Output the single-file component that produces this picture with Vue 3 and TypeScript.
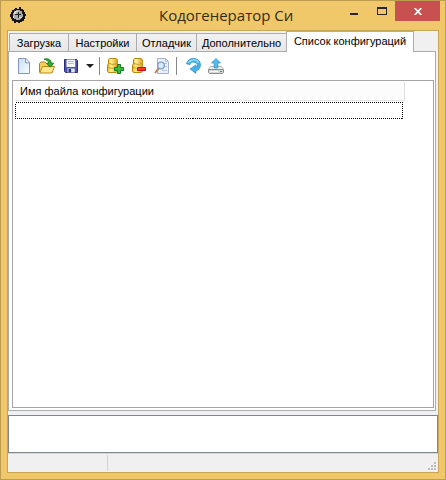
<script setup lang="ts">
import { ref } from 'vue'

interface Tab { label: string; width: number; spacing: number }

const tabs: Tab[] = [
  { label: 'Загрузка', width: 59, spacing: 0 },
  { label: 'Настройки', width: 68, spacing: 0 },
  { label: 'Отладчик', width: 60, spacing: 0 },
  { label: 'Дополнительно', width: 90, spacing: 0 },
  { label: 'Список конфигураций', width: 128, spacing: 0 },
]
const active = ref(4)
</script>

<template>
  <div class="window">
    <header class="titlebar">
      <svg class="gear" width="16" height="16" viewBox="0 0 16 16" shape-rendering="crispEdges">
        <path fill="#151515" d="M5 1h2v1h2V0h2v2h2v1h1v2h1v2h1v2h-1v3h-1v2h-2v1h-2v1H8v-1H6v1H4v-2H2v-2H1v-2H0V7h1V5h1V3h2V2h1z" />
        <circle cx="8" cy="8" r="5" fill="#aaa" />
        <path fill="#ddd" d="M5 4h3v1H6v2H4V5h1zM9 10h3v1H9zM3 9h1v2H3z" />
        <path fill="#222" d="M8 5h1v2h2v1H9v3H8V8H5V7h3zM4 3h2v1H4zM12 5h1v2h-1zM11 11h1v1h-1z" />
      </svg>
      <h1>Кодогенератор Си</h1>
      <div class="controls">
        <button class="min" aria-label="Свернуть"><i></i></button>
        <button class="max" aria-label="Развернуть"><i></i></button>
        <button class="close" aria-label="Закрыть">
          <svg width="8" height="7" viewBox="0 0 8 7"><path d="M.7 0l6.6 7M7.3 0L.7 7" stroke="#fff" stroke-width="1.7" /></svg>
        </button>
      </div>
    </header>

    <main class="client">
      <nav class="tabs">
        <button
          v-for="(t, i) in tabs"
          :key="t.label"
          class="tab"
          :class="{ active: i === active }"
          :style="{ width: t.width + 'px', letterSpacing: t.spacing + 'px' }"
          @click="active = i"
        >{{ t.label }}</button>
      </nav>

      <section class="pane">
        <div class="toolbar">
          <svg class="doc" width="12" height="16" viewBox="0 0 12 16">
            <defs><linearGradient id="paper" x1="0" y1="0" x2="1" y2="1"><stop offset="0" stop-color="#c9dcf4" /><stop offset="1" stop-color="#fafdff" /></linearGradient></defs>
            <path d="M.5.5h7.5l3.5 3.8v11.2H.5z" fill="url(#paper)" stroke="#8094bd" />
            <path d="M7.5.8v4h3.8" fill="#eef5ff" stroke="#8094bd" />
          </svg>
          <svg class="folder" width="16" height="16" viewBox="0 0 16 16">
            <path d="M.5 14V5.5L2 4h4l1.5 1.5H13V14z" fill="#f6cf55" stroke="#b88413" />
            <path d="M.8 15l2.7-6.5h12L13 15z" fill="#ffe88b" stroke="#bd8a17" />
            <path d="M5 1.2c3.8-1.4 7 .2 7.4 4h2.3l-3.6 4-3.6-4h2.2C9.3 3 7.8 1.8 5 1.2z" fill="#34ad35" stroke="#14751b" stroke-width=".8" />
          </svg>
          <svg class="floppy" width="14" height="14" viewBox="0 0 14 14">
            <path d="M.5.5h12l1 1v12h-12l-1-1z" fill="#4c50b5" stroke="#292d82" />
            <path d="M2.5.5h8.7V8H2.5z" fill="#f4f5fb" />
            <path d="M4 2.5h5.8M4 4.5h5.8" stroke="#b7bcc9" />
            <path d="M3.5 9.5h7.3v4H3.5z" fill="#dfe3ee" /><path d="M4.5 10h2.6v3.5H4.5z" fill="#27307b" />
          </svg>
          <svg class="caret" width="8" height="4" viewBox="0 0 8 4"><path d="M0 0h8L4 4z" fill="#222" /></svg>
          <i class="sep first"></i>
          <svg class="dbadd" width="17" height="16" viewBox="0 0 17 16">
            <defs><linearGradient id="gold"><stop offset="0" stop-color="#e7af16" /><stop offset=".35" stop-color="#fff48f" /><stop offset="1" stop-color="#dfa817" /></linearGradient></defs>
            <path d="M2.5.5h6.8l1 1v12l-1 1H1.5l-1-1V7l1-1V1.5z" fill="url(#gold)" stroke="#bd850c" />
            <path d="M2 5.5q4 2 8 0M1 9.5q4.5 2 9 0" fill="none" stroke="#d09b1d" />
            <path d="M10.5 6.5h3v3h3v3h-3v3h-3v-3h-3v-3h3z" fill="#38bd3c" stroke="#137b25" />
          </svg>
          <svg class="dbdel" width="14" height="16" viewBox="0 0 14 16">
            <path d="M2.5.5h6.8l1 1v12l-1 1H1.5l-1-1V7l1-1V1.5z" fill="url(#gold)" stroke="#bd850c" />
            <path d="M2 5.5q4 2 8 0M1 9.5q4.5 2 9 0" fill="none" stroke="#d09b1d" />
            <path d="M5.5 9.5h8v3h-8z" fill="#f13c25" stroke="#c91410" />
          </svg>
          <svg class="search" width="16" height="16" viewBox="0 0 16 16">
            <path d="M3.5.5h8l3 3v12h-11z" fill="#e9f0fc" stroke="#a5afd0" />
            <path d="M11.5.5v3h3M9 5.5h4M10 8.5h3M8 12.5h5" fill="none" stroke="#b7c0dc" />
            <path d="M4.5 10.5L1 15" stroke="#c77b44" stroke-width="2" />
            <circle cx="7" cy="7.5" r="3.3" fill="#d2edff" stroke="#809dc5" stroke-width="1.3" />
          </svg>
          <i class="sep second"></i>
          <svg class="refresh" width="15" height="16" viewBox="0 0 15 16">
            <path d="M.6 5.8C1.7 1.8 4.3.5 7.3.5c4.3 0 7.1 2.8 7.1 6.3 0 3-1.7 5.3-4.6 6v2.5L4.2 11l5.6-4v2.3c1.1-.5 1.6-1.2 1.6-2.2 0-1.9-1.6-3-4-3-1.6 0-2.7.6-3.3 2.4z" fill="#43b5ed" stroke="#2389cc" stroke-width=".8" />
            <path d="M2.3 4.7C5 .8 10.6 1 12.7 4.5" fill="none" stroke="#9be1ff" stroke-width="1.2" />
          </svg>
          <svg class="upload" width="16" height="16" viewBox="0 0 16 16">
            <path d="M2.5 8.5h11l2 3v3l-1 1h-13l-1-1v-3z" fill="#eee" stroke="#b3b3b3" />
            <path d="M.5 11.5h15v3l-1 1h-13l-1-1z" fill="#d8d8d8" stroke="#8c8c8c" />
            <path d="M12 13.5h2" stroke="#31a631" /><path d="M2 13.5h8" stroke="#f5f5f5" />
            <path d="M8 .5l4.5 4.4h-2.7v5H6.2v-5H3.5z" fill="#52bdf1" stroke="#2b93cf" stroke-width=".8" />
          </svg>
        </div>

        <div class="list">
          <div class="list-header"><span>Имя файла конфигурации</span></div>
          <svg class="focus-row" width="388" height="17" viewBox="0 0 388 17" shape-rendering="crispEdges">
            <rect x=".5" y=".5" width="387" height="16" fill="none" stroke="#000" stroke-dasharray="1 1" />
          </svg>
        </div>
      </section>

      <textarea class="output"></textarea>
      <footer class="status">
        <i class="divider"></i>
        <svg class="grip" width="8" height="8" viewBox="0 0 8 8"><path fill="#bdbdbd" d="M6 0h2v2H6zM3 3h2v2H3zM6 3h2v2H6zM0 6h2v2H0zM3 6h2v2H3zM6 6h2v2H6z" /></svg>
      </footer>
    </main>
  </div>
</template>

<style>
body { margin: 0; overflow: hidden; }
</style>

<style scoped>
* { box-sizing: border-box; }
button { font: inherit; color: inherit; border: 0; margin: 0; padding: 0; background: none; }
svg { display: block; flex: none; }
.window { width: 446px; height: 480px; padding: 0 6px 6px; border: 1px solid #bc9c51; background: #f0c869; font: 11px "Liberation Sans", sans-serif; color: #000; display: flex; flex-direction: column; }
.titlebar { height: 29px; flex: none; display: flex; align-items: flex-start; }
.gear { margin: 6px 0 0 3px; }
h1 { margin: 4px 0 0 133px; width: 128px; font: 15px/21px "Open Sans", sans-serif; color: #332b1c; white-space: nowrap; }
.controls { display: flex; height: 20px; margin-left: auto; margin-right: -1px; }
.controls button { display: flex; align-items: center; justify-content: center; }
.min { width: 28px; } .min i { width: 8px; height: 2px; background: #272727; margin-top: 6px; }
.max { width: 27px; } .max i { width: 10px; height: 8px; border: 1px solid #272727; border-top-width: 2px; }
.controls .close { width: 45px; background: #c75050; }
.client { border: 1px solid #c9a557; background: #f0f0f0; flex: 1; display: flex; flex-direction: column; min-height: 0; }
.tabs { height: 20px; flex: none; display: flex; align-items: flex-end; padding-left: 1px; background: #f0f0f0; }
.tab { height: 18px; flex: none; white-space: nowrap; border: 1px solid #acacac; border-bottom: 0; border-right-width: 0; background: linear-gradient(#f1f1f1, #e7e7e7); line-height: 18px; }
.tab.active { height: 21px; margin: 0 0 -1px; background: #fff; border-right-width: 1px; line-height: 19px; padding-bottom: 2px; position: relative; }
.tab:first-child { margin-left: 0; }
.pane { width: 428px; height: 360px; flex: none; border: 1px solid #acacac; background: #fff; padding: 0 2px 2px 3px; }
.toolbar { height: 28px; display: flex; align-items: flex-start; padding: 6px 0 0 6px; }
.folder { margin-left: 9px; }
.floppy { margin: 1px 0 0 9px; }
.caret { margin: 6px 0 0 8px; }
.sep { width: 1px; height: 18px; flex: none; background: #888; margin-top: -1px; }
.first { margin-left: 5px; } .dbadd { margin-left: 7px; } .dbdel { margin-left: 8px; } .search { margin-left: 8px; }
.second { margin-left: 6px; } .refresh { margin-left: 9px; } .upload { margin-left: 7px; }
.list { height: 328px; width: 422px; border: 1px solid #a5a5a8; padding: 1px 2px; }
.list-header { width: 390px; height: 19px; border-right: 1px solid #dedede; border-bottom: 1px solid #e6e6e6; background: #fcfcfc; padding-left: 5px; line-height: 18px; white-space: nowrap; }
.focus-row { margin-top: 1px; }
.output { display: block; width: 430px; height: 38px; flex: none; margin: 4px 0 0; border: 1px solid #7e858e; background: #fff; resize: none; outline: none; padding: 0; }
.status { flex: 1; border-top: 1px solid #d7d7d7; display: flex; justify-content: space-between; align-items: flex-start; padding: 1px 2px 0 99px; }
.divider { width: 1px; height: 16px; background: #d3d3d3; }
.grip { margin-top: 7px; }
</style>
